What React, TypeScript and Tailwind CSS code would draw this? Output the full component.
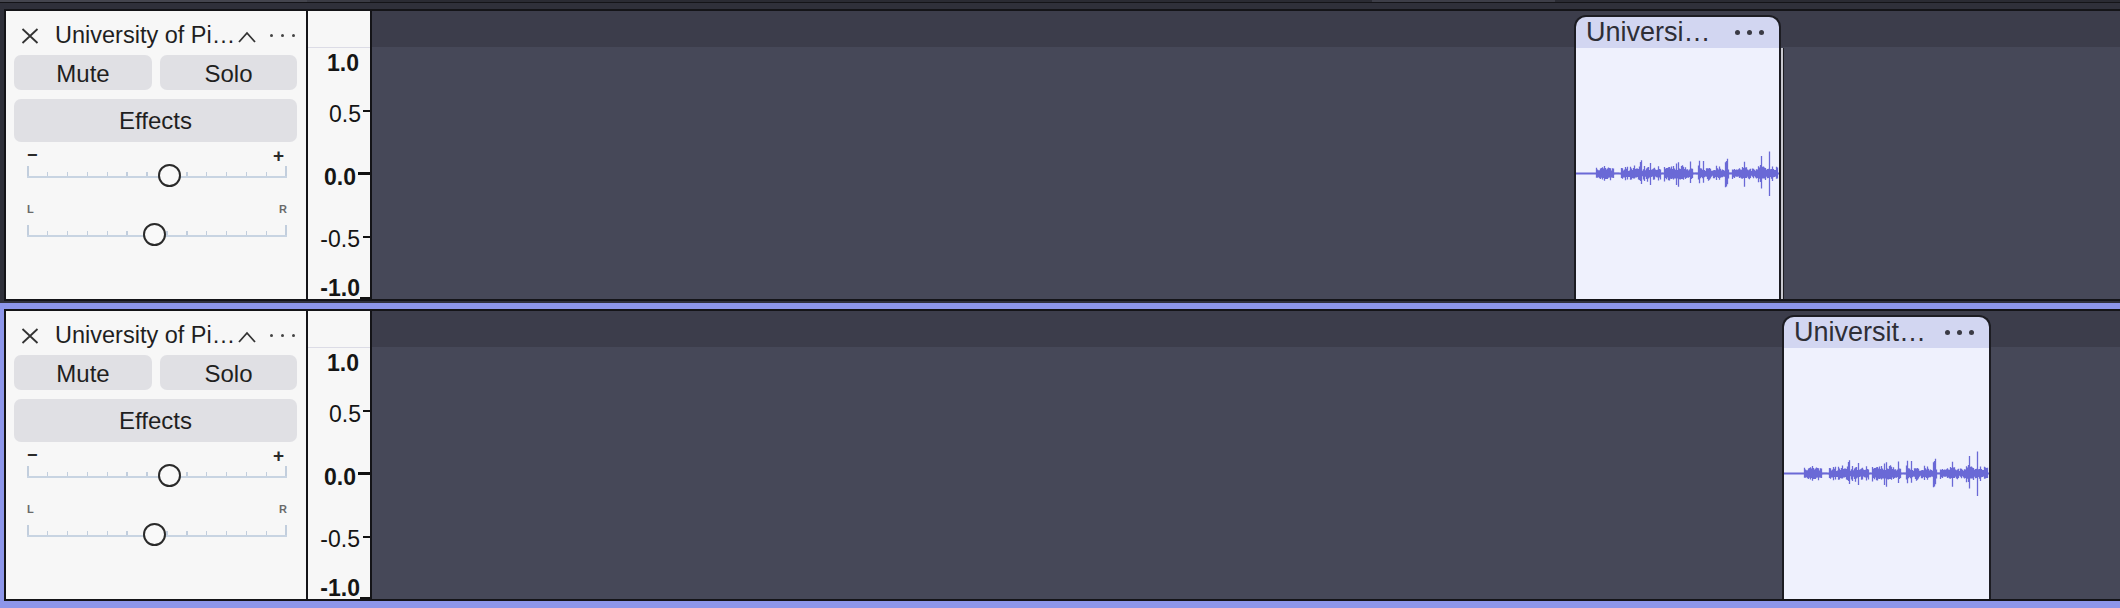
import React from "react";

function rnd(i: number) {
  const x = Math.sin(i * 12.9898 + 78.233) * 43758.5453;
  return x - Math.floor(x);
}

function wavePath(width: number) {
  let d = "";
  for (let x = 20; x < width - 1; x++) {
    const quiet =
      (x >= 38 && x <= 44) ||
      (x >= 85 && x <= 87) ||
      (x >= 117 && x <= 121) ||
      (x >= 153 && x <= 155);
    const block = Math.floor(x / 5);
    let a = quiet ? 0.8 : 3 + rnd(block) * 3 + rnd(x) * 2.5;
    if (!quiet) {
      const s = rnd(x + 1000);
      const boost = x > 168 ? 1.55 : 1;
      if (s > 0.8) a = (7 + rnd(x + 2000) * 9) * boost;
    }
    const up = a * (0.6 + 0.4 * rnd(x + 3000));
    const dn = a * (0.6 + 0.4 * rnd(x + 4000));
    d += `M${x + 0.5} ${(-up).toFixed(1)}V${dn.toFixed(1)}`;
  }
  return d;
}

function Wave({ width }: { width: number }) {
  const d = wavePath(width);
  return (
    <svg width={width} height={251} className="block">
      <g transform="translate(0,125.5)">
        <rect x={0} y={-1} width={width} height={2} fill="#6a69d6" />
        <path d={d} stroke="#6a69d6" strokeWidth={1.3} fill="none" />
      </g>
    </svg>
  );
}

function ClipDots() {
  return (
    <div className="flex items-center gap-[7px]">
      <div className="w-[5px] h-[5px] rounded-full bg-[#3a3a44]" />
      <div className="w-[5px] h-[5px] rounded-full bg-[#3a3a44]" />
      <div className="w-[5px] h-[5px] rounded-full bg-[#3a3a44]" />
    </div>
  );
}

function ClipBody({ title, width }: { title: string; width: number }) {
  return (
    <>
      <div className="h-[31px] shrink-0 bg-[#d2d6f1] flex items-center justify-between pl-[10px] pr-[15px]">
        <span className="text-[27px] leading-[27px] text-[#2e2e36] whitespace-nowrap">{title}</span>
        <ClipDots />
      </div>
      <div className="flex-1 bg-[#eff1fd] overflow-hidden">
        <Wave width={width} />
      </div>
    </>
  );
}

function Slider({ thumb, left, right, small }: { thumb: "gain" | "pan"; left: string; right: string; small?: boolean }) {
  const ticks = Array.from({ length: 14 }, (_, i) => i);
  return (
    <div className="ml-[21px] w-[260px]">
      {small ? (
        <div className="mt-[13px] h-[16px] flex items-center justify-between text-[11px] font-bold text-[#6a6a6a] leading-none">
          <span>{left}</span>
          <span>{right}</span>
        </div>
      ) : (
        <div className="mt-[4px] h-[18px] flex items-center justify-between font-bold text-[#2a2a2a] leading-none">
          <span className="text-[18px]">{left}</span>
          <span className="text-[19px] mr-[3px]">{right}</span>
        </div>
      )}
      <div className={small ? "relative h-[24px] mt-[6px]" : "relative h-[24px]"}>
        <div className="absolute left-0 right-0 top-[12px] h-[2px] bg-[#c8d4e2]" />
        <div className="absolute left-0 right-0 top-[2px] h-[10px] flex justify-between items-end">
          {ticks.map((i) => (
            <div
              key={i}
              className={i === 0 || i === 13 ? "w-[1.5px] h-[10px] bg-[#c2cedd]" : "w-[1.5px] h-[4px] bg-[#c2cedd]"}
            />
          ))}
        </div>
        <div
          className={
            thumb === "gain"
              ? "absolute top-[0px] left-[131px] w-[23px] h-[23px] rounded-full border-2 border-[#2a2a2a] bg-[#f9f9f9]"
              : "absolute top-[0px] left-[116px] w-[23px] h-[23px] rounded-full border-2 border-[#2a2a2a] bg-[#f9f9f9]"
          }
        />
      </div>
    </div>
  );
}

function Header() {
  return (
    <div className="w-[302px] shrink-0 bg-[#f7f7f7] border-r-2 border-[#141418] flex flex-col text-[#1f1f1f]">
      <div className="pt-[7px] h-[42px] flex items-center">
        <div className="pl-[15px] w-[33px] flex items-center">
          <svg width="18" height="16" viewBox="0 0 18 16">
            <path d="M1.5 1 L16.5 15 M16.5 1 L1.5 15" stroke="#333" strokeWidth="1.8" fill="none" />
          </svg>
        </div>
        <span className="ml-[16px] w-[183px] text-[23.5px] leading-[23px] whitespace-nowrap">University of Pi…</span>
        <svg width="18" height="12" viewBox="0 0 18 12" className="mt-[2px]">
          <path d="M1 11 L9 2 L17 11" stroke="#333" strokeWidth="1.8" fill="none" />
        </svg>
        <div className="ml-[14px] flex items-center gap-[8px]">
          <div className="w-[3px] h-[3px] rounded-full bg-[#444]" />
          <div className="w-[3px] h-[3px] rounded-full bg-[#444]" />
          <div className="w-[3px] h-[3px] rounded-full bg-[#444]" />
        </div>
      </div>
      <div className="mt-[2px] px-[8px] flex gap-[8px]">
        <div className="w-[138px] h-[35px] rounded-[7px] bg-[#e0e0e4] flex items-center justify-center text-[24px] leading-none pt-[2px]">
          Mute
        </div>
        <div className="w-[137px] h-[35px] rounded-[7px] bg-[#e0e0e4] flex items-center justify-center text-[24px] leading-none pt-[2px]">
          Solo
        </div>
      </div>
      <div className="mt-[9px] mx-[8px] w-[283px] h-[43px] rounded-[7px] bg-[#e0e0e4] flex items-center justify-center text-[24px] leading-none">
        Effects
      </div>
      <Slider thumb="gain" left="−" right="+" />
      <Slider thumb="pan" left="L" right="R" small />
    </div>
  );
}

function Ruler() {
  return (
    <div className="w-[64px] shrink-0 bg-[#f7f7f7] border-r-2 border-[#141418] relative text-[23px] leading-[23px] text-[#151515]">
      <div className="absolute left-0 right-0 top-[36px] h-[1px] bg-[#dcdce6]" />
      <span className="absolute top-[41px] right-[11px] font-bold">1.0</span>
      <span className="absolute top-[92px] right-[9px]">0.5</span>
      <span className="absolute top-[155px] right-[14px] font-bold">0.0</span>
      <span className="absolute top-[217px] right-[10px]">-0.5</span>
      <span className="absolute top-[266px] right-[10px] font-bold">-1.0</span>
      <div className="absolute right-0 top-[99px] w-[7px] h-[2px] bg-[#111]" />
      <div className="absolute right-0 top-[161px] w-[12px] h-[3px] bg-[#111]" />
      <div className="absolute right-0 top-[225px] w-[7px] h-[2px] bg-[#111]" />
      <div className="absolute right-0 top-[286px] w-[10px] h-[2px] bg-[#111]" />
    </div>
  );
}

function Canvas({ second }: { second?: boolean }) {
  return (
    <div className="flex-1 relative flex flex-col">
      <div className="h-[36px] bg-[#3c3d4b]" />
      <div className="flex-1 bg-[#464858]" />
      {second ? (
        <div className="absolute top-[4px] bottom-0 left-[1410px] w-[209px] flex flex-col rounded-t-[12px] border-2 border-b-0 border-[#1c1c22] overflow-hidden">
          <ClipBody title="Universit…" width={205} />
        </div>
      ) : (
        <>
          <div className="absolute top-[4px] bottom-0 left-[1202px] w-[207px] flex flex-col rounded-t-[12px] border-2 border-b-0 border-[#1c1c22] overflow-hidden">
            <ClipBody title="Universi…" width={203} />
          </div>
          <div className="absolute top-[37px] bottom-0 left-[1409px] w-[3px] bg-[#c9c9d0] border-r border-[#1c1c22]" />
        </>
      )}
    </div>
  );
}

function Track({ selected }: { selected?: boolean }) {
  return (
    <div
      className={
        selected
          ? "border-l-4 border-t-[6px] border-b-[7px] border-[#8d96ea]"
          : "border-l-4 border-t-[6px] border-b-2 border-[#2f303a]"
      }
    >
      <div className="flex h-[292px] border-y-2 border-l-2 border-[#141418]">
        <Header />
        <Ruler />
        <Canvas second={selected} />
      </div>
    </div>
  );
}

export default function App() {
  return (
    <div className="w-[2120px] h-[608px] overflow-hidden bg-[#2f303a] font-['Liberation_Sans',Arial,sans-serif]">
      <div className="h-[3px] flex flex-col">
        <div className="h-[2px] flex">
          <div className="w-[307px] bg-[#44454e]" />
          <div className="w-[63px] bg-[#3a3b44]" />
          <div className="w-[1002px] bg-[#2a2b33]" />
          <div className="w-[183px] bg-[#3d3e48]" />
          <div className="flex-1 bg-[#2a2b33]" />
        </div>
        <div className="h-[1px] bg-[#141418]" />
      </div>
      <Track />
      <Track selected />
    </div>
  );
}
